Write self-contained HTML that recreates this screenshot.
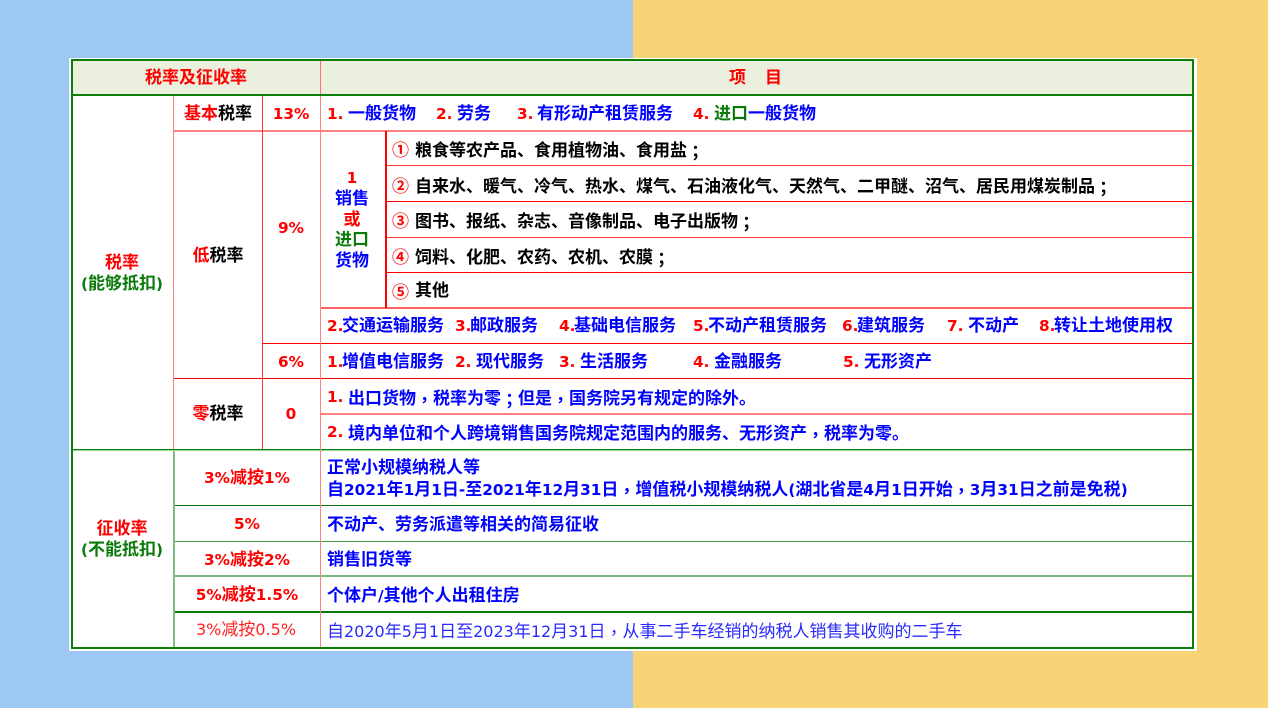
<!DOCTYPE html>
<html><head><meta charset="utf-8"><title>税率及征收率</title>
<style>
html,body{margin:0;padding:0;width:1268px;height:708px;overflow:hidden;background:#9dc8f3}
#r{position:absolute;left:633px;top:0;width:635px;height:708px;background:#f7d576}
#w{position:absolute;left:69px;top:58px;width:1128px;height:593px;background:#fff}
#h{position:absolute;left:73px;top:61px;width:1119px;height:33px;background:#ebefdd}
.l{position:absolute}
.t{position:absolute;white-space:nowrap;font:700 17px/24px "DejaVu Sans","Noto Sans CJK SC",sans-serif;transform:translateY(-11px);filter:blur(.25px)}
.t .n{font-size:15.3px}
.t .d{font-size:16px}
.c{font-family:"Noto Sans CJK TC",sans-serif;position:relative;top:2px}
.r{color:#f00}.b{color:#00f}.k{color:#000}.g{color:#0a7a0a}
.o{font-family:"Noto Sans CJK SC",sans-serif;color:#f00;font-size:17px}
.ctr{transform:translate(-50%,-11px)}
.thin{font-weight:400}
</style></head><body>
<div id="r"></div><div id="w"></div><div id="h"></div>

<!-- horizontal lines -->
<div class="l" style="left:73px;top:94px;width:1119px;height:2px;background:#0a800a"></div>
<div class="l" style="left:174px;top:130px;width:1018px;height:2px;background:#ff8080"></div>
<div class="l" style="left:386px;top:165px;width:806px;height:1px;background:#f33"></div>
<div class="l" style="left:386px;top:201px;width:806px;height:1px;background:#f00"></div>
<div class="l" style="left:386px;top:237px;width:806px;height:1px;background:#f33"></div>
<div class="l" style="left:386px;top:272px;width:806px;height:1px;background:#f00"></div>
<div class="l" style="left:320px;top:307px;width:872px;height:2px;background:#ff6060"></div>
<div class="l" style="left:262px;top:343px;width:930px;height:1px;background:#f00"></div>
<div class="l" style="left:174px;top:378px;width:1018px;height:1px;background:#f00"></div>
<div class="l" style="left:320px;top:413px;width:872px;height:2px;background:#ff8080"></div>
<div class="l" style="left:73px;top:449px;width:1119px;height:1px;background:#0a800a"></div>
<div class="l" style="left:73px;top:450px;width:1119px;height:1px;background:#9fd09f"></div>
<div class="l" style="left:174px;top:505px;width:1018px;height:1px;background:#0a700a"></div>
<div class="l" style="left:174px;top:541px;width:1018px;height:1px;background:#4a9a4a"></div>
<div class="l" style="left:174px;top:575px;width:1018px;height:2px;background:#7dbb7d"></div>
<div class="l" style="left:174px;top:611px;width:1018px;height:2px;background:#0a7a0a"></div>

<!-- vertical lines -->
<div class="l" style="left:173px;top:96px;width:1px;height:353px;background:#ff8080"></div>
<div class="l" style="left:173px;top:451px;width:2px;height:196px;background:#80bb80"></div>
<div class="l" style="left:262px;top:96px;width:1px;height:353px;background:#f33"></div>
<div class="l" style="left:320px;top:61px;width:1px;height:33px;background:#ff7070"></div>
<div class="l" style="left:320px;top:96px;width:1px;height:551px;background:#ff8080"></div>
<div class="l" style="left:385px;top:131px;width:2px;height:177px;background:#f00"></div>

<!-- outer border -->
<div class="l" style="left:71px;top:59px;width:1123px;height:590px;border:0;box-shadow:inset 0 0 0 2px #0a800a"></div>

<!-- header -->
<div class="t r ctr" style="left:196px;top:77px">税率及征收率</div>
<div class="t r" style="left:729px;top:77px">项</div>
<div class="t r" style="left:765px;top:77px">目</div>

<!-- first columns -->
<div class="t r ctr" style="left:122px;top:262px">税率</div>
<div class="t g ctr" style="left:122px;top:283px"><span class="n">(</span>能够抵扣<span class="n">)</span></div>
<div class="t ctr" style="left:218px;top:113px"><span class="r">基本</span><span class="k">税率</span></div>
<div class="t ctr" style="left:218px;top:255px"><span class="r">低</span><span class="k">税率</span></div>
<div class="t ctr" style="left:218px;top:413px"><span class="r">零</span><span class="k">税率</span></div>
<div class="t r ctr" style="left:291px;top:113px"><span class="n">13%</span></div>
<div class="t r ctr" style="left:291px;top:227px"><span class="n">9%</span></div>
<div class="t r ctr" style="left:291px;top:361px"><span class="n">6%</span></div>
<div class="t r ctr" style="left:291px;top:413px"><span class="n">0</span></div>

<div class="t r ctr" style="left:352px;top:177px"><span class="n">1</span></div>
<div class="t b ctr" style="left:352px;top:198px">销售</div>
<div class="t r ctr" style="left:352px;top:219px">或</div>
<div class="t g ctr" style="left:352px;top:239px">进口</div>
<div class="t b ctr" style="left:352px;top:260px">货物</div>

<!-- row 13% -->
<div class="t r" style="left:327px;top:113px"><span class="n">1.</span></div><div class="t b" style="left:348px;top:113px">一般货物</div>
<div class="t r" style="left:436px;top:113px"><span class="n">2.</span></div><div class="t b" style="left:457px;top:113px">劳务</div>
<div class="t r" style="left:517px;top:113px"><span class="n">3.</span></div><div class="t b" style="left:537px;top:113px">有形动产租赁服务</div>
<div class="t r" style="left:693px;top:113px"><span class="n">4.</span></div><div class="t g" style="left:714px;top:113px">进口</div><div class="t b" style="left:748px;top:113px">一般货物</div>

<!-- list -->
<div class="t o" style="left:392px;top:148px">①</div><div class="t k" style="left:415px;top:148px">粮食等农产品、食用植物油、食用盐<span class="c">；</span></div>
<div class="t o" style="left:392px;top:184px">②</div><div class="t k" style="left:415px;top:184px">自来水、暖气、冷气、热水、煤气、石油液化气、天然气、二甲醚、沼气、居民用煤炭制品<span class="c">；</span></div>
<div class="t o" style="left:392px;top:219px">③</div><div class="t k" style="left:415px;top:219px">图书、报纸、杂志、音像制品、电子出版物<span class="c">；</span></div>
<div class="t o" style="left:392px;top:255px">④</div><div class="t k" style="left:415px;top:255px">饲料、化肥、农药、农机、农膜<span class="c">；</span></div>
<div class="t o" style="left:392px;top:290px">⑤</div><div class="t k" style="left:415px;top:290px">其他</div>

<!-- row 2 -->
<div class="t r" style="left:327px;top:325px"><span class="n">2.</span></div><div class="t b" style="left:342px;top:325px">交通运输服务</div>
<div class="t r" style="left:455px;top:325px"><span class="n">3.</span></div><div class="t b" style="left:470px;top:325px">邮政服务</div>
<div class="t r" style="left:559px;top:325px"><span class="n">4.</span></div><div class="t b" style="left:574px;top:325px">基础电信服务</div>
<div class="t r" style="left:693px;top:325px"><span class="n">5.</span></div><div class="t b" style="left:708px;top:325px">不动产租赁服务</div>
<div class="t r" style="left:842px;top:325px"><span class="n">6.</span></div><div class="t b" style="left:857px;top:325px">建筑服务</div>
<div class="t r" style="left:947px;top:325px"><span class="n">7.</span></div><div class="t b" style="left:968px;top:325px">不动产</div>
<div class="t r" style="left:1039px;top:325px"><span class="n">8.</span></div><div class="t b" style="left:1054px;top:325px">转让土地使用权</div>

<!-- row 6% -->
<div class="t r" style="left:327px;top:361px"><span class="n">1.</span></div><div class="t b" style="left:342px;top:361px">增值电信服务</div>
<div class="t r" style="left:455px;top:361px"><span class="n">2.</span></div><div class="t b" style="left:476px;top:361px">现代服务</div>
<div class="t r" style="left:559px;top:361px"><span class="n">3.</span></div><div class="t b" style="left:580px;top:361px">生活服务</div>
<div class="t r" style="left:693px;top:361px"><span class="n">4.</span></div><div class="t b" style="left:714px;top:361px">金融服务</div>
<div class="t r" style="left:843px;top:361px"><span class="n">5.</span></div><div class="t b" style="left:864px;top:361px">无形资产</div>

<!-- zero -->
<div class="t r" style="left:327px;top:396px"><span class="n">1.</span></div><div class="t b" style="left:348px;top:396px">出口货物<span class="c">，</span>税率为零<span class="c">；</span>但是<span class="c">，</span>国务院另有规定的除外。</div>
<div class="t r" style="left:327px;top:431px"><span class="n">2.</span></div><div class="t b" style="left:348px;top:431px">境内单位和个人跨境销售国务院规定范围内的服务、无形资产<span class="c">，</span>税率为零。</div>

<!-- lower block -->
<div class="t r ctr" style="left:122px;top:528px">征收率</div>
<div class="t g ctr" style="left:122px;top:549px"><span class="n">(</span>不能抵扣<span class="n">)</span></div>
<div class="t r ctr" style="left:247px;top:477px"><span class="n">3%</span>减按<span class="n">1%</span></div>
<div class="t r ctr" style="left:247px;top:523px"><span class="n">5%</span></div>
<div class="t r ctr" style="left:247px;top:559px"><span class="n">3%</span>减按<span class="n">2%</span></div>
<div class="t r ctr" style="left:247px;top:594px"><span class="n">5%</span>减按<span class="n">1.5%</span></div>
<div class="t r ctr thin" style="left:246px;top:629px;color:#f22"><span class="d">3%</span>减按<span class="d">0.5%</span></div>

<div class="t b" style="left:327px;top:467px">正常小规模纳税人等</div>
<div class="t b" style="left:327px;top:487px">自<span class="n">2021</span>年<span class="n">1</span>月<span class="n">1</span>日<span class="n">-</span>至<span class="n">2021</span>年<span class="n">12</span>月<span class="n">31</span>日<span class="c">，</span>增值税小规模纳税人<span class="n">(</span>湖北省是<span class="n">4</span>月<span class="n">1</span>日开始<span class="c">，</span><span class="n">3</span>月<span class="n">31</span>日之前是免税<span class="n">)</span></div>
<div class="t b" style="left:327px;top:524px">不动产、劳务派遣等相关的简易征收</div>
<div class="t b" style="left:327px;top:559px">销售旧货等</div>
<div class="t b" style="left:327px;top:595px">个体户<span class="n">/</span>其他个人出租住房</div>
<div class="t thin" style="left:327px;top:629px;color:#2a2aff">自<span class="d">2020</span>年<span class="d">5</span>月<span class="d">1</span>日至<span class="d">2023</span>年<span class="d">12</span>月<span class="d">31</span>日<span class="c">，</span>从事二手车经销的纳税人销售其收购的二手车</div>
</body></html>
